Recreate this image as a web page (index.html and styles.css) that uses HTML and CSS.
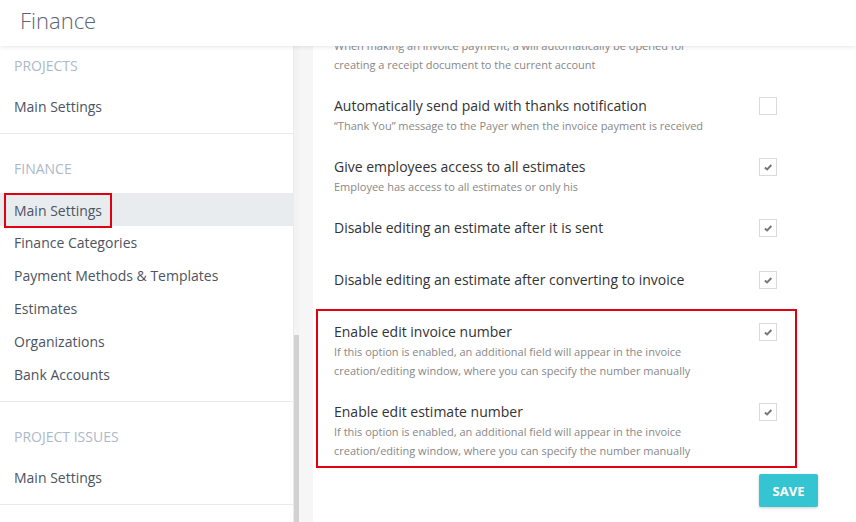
FILE: index.html
```html
<!DOCTYPE html>
<html lang="en">
<head>
    <meta charset="UTF-8">
    <meta name="viewport" content="width=device-width, initial-scale=1.0">
    <title>Finance</title>
    <link rel="stylesheet" href="styles.css">
</head>
<body>
    <!-- Top bar -->
    <header class="topbar">
        <h1 class="page-title">Finance</h1>
    </header>

    <div class="layout">
        <!-- Settings menu -->
        <aside class="sidebar">
            <nav class="sidebar-nav">
                <section class="nav-group">
                    <div class="nav-heading">Projects</div>
                    <a class="nav-item" href="#">Main Settings</a>
                </section>
                <section class="nav-group">
                    <div class="nav-heading">Finance</div>
                    <a class="nav-item active" href="#"><span class="marked">Main Settings</span></a>
                    <a class="nav-item" href="#">Finance Categories</a>
                    <a class="nav-item" href="#">Payment Methods &amp; Templates</a>
                    <a class="nav-item" href="#">Estimates</a>
                    <a class="nav-item" href="#">Organizations</a>
                    <a class="nav-item" href="#">Bank Accounts</a>
                </section>
                <section class="nav-group">
                    <div class="nav-heading">Project Issues</div>
                    <a class="nav-item" href="#">Main Settings</a>
                </section>
            </nav>
            <div class="scrollbar"><div class="scrollbar-thumb"></div></div>
        </aside>

        <!-- Settings list (scrolled) -->
        <main class="panel">
            <div class="settings">
                <div class="setting scrolled">
                    <div class="setting-text">
                        <div class="setting-desc">When making an invoice payment, a will automatically be opened for creating a receipt document to the current account</div>
                    </div>
                </div>
                <div class="setting">
                    <div class="setting-text">
                        <div class="setting-title">Automatically send paid with thanks notification</div>
                        <div class="setting-desc">“Thank You” message to the Payer when the invoice payment is received</div>
                    </div>
                    <span class="checkbox"></span>
                </div>
                <div class="setting">
                    <div class="setting-text">
                        <div class="setting-title">Give employees access to all estimates</div>
                        <div class="setting-desc">Employee has access to all estimates or only his</div>
                    </div>
                    <span class="checkbox checked"><svg viewBox="0 0 18 18"><polyline points="5.5,9.5 8,11.8 12.8,6.8"/></svg></span>
                </div>
                <div class="setting">
                    <div class="setting-text">
                        <div class="setting-title">Disable editing an estimate after it is sent</div>
                    </div>
                    <span class="checkbox checked"><svg viewBox="0 0 18 18"><polyline points="5.5,9.5 8,11.8 12.8,6.8"/></svg></span>
                </div>
                <div class="setting">
                    <div class="setting-text">
                        <div class="setting-title">Disable editing an estimate after converting to invoice</div>
                    </div>
                    <span class="checkbox checked"><svg viewBox="0 0 18 18"><polyline points="5.5,9.5 8,11.8 12.8,6.8"/></svg></span>
                </div>

                <div class="highlight">
                    <div class="setting">
                        <div class="setting-text">
                            <div class="setting-title">Enable edit invoice number</div>
                            <div class="setting-desc">If this option is enabled, an additional field will appear in the invoice creation/editing window, where you can specify the number manually</div>
                        </div>
                        <span class="checkbox checked"><svg viewBox="0 0 18 18"><polyline points="5.5,9.5 8,11.8 12.8,6.8"/></svg></span>
                    </div>
                    <div class="setting">
                        <div class="setting-text">
                            <div class="setting-title">Enable edit estimate number</div>
                            <div class="setting-desc">If this option is enabled, an additional field will appear in the invoice creation/editing window, where you can specify the number manually</div>
                        </div>
                        <span class="checkbox checked"><svg viewBox="0 0 18 18"><polyline points="5.5,9.5 8,11.8 12.8,6.8"/></svg></span>
                    </div>
                </div>

                <div class="actions">
                    <button class="btn-save" type="button">SAVE</button>
                </div>
            </div>
        </main>
    </div>
</body>
</html>
```

FILE: styles.css
```css
* {
    box-sizing: border-box;
}

body {
    margin: 0;
    height: 522px;
    overflow: hidden;
    font-family: "Open Sans", "Noto Sans", sans-serif;
    background-color: #f6f6f6;
    color: #333;
}

/* Top bar */
.topbar {
    position: relative;
    z-index: 2;
    height: 46px;
    background-color: #fff;
    box-shadow: 0 1px 4px rgba(0, 0, 0, 0.1);
}

.page-title {
    margin: 0;
    padding-left: 20px;
    font-size: 22px;
    font-weight: 300;
    line-height: 40px;
    color: #5b6471;
}

.layout {
    display: flex;
    height: 476px;
}

/* Sidebar */
.sidebar {
    display: flex;
    width: 299px;
    background-color: #fff;
    overflow: hidden;
}

.sidebar-nav {
    width: 293px;
    margin-top: -15px;
}

.nav-group {
    padding: 25px 0 10px;
    border-bottom: 1px solid #e8ebee;
}

.nav-heading {
    padding-left: 14px;
    margin-bottom: 14px;
    font-size: 14px;
    line-height: 20px;
    text-transform: uppercase;
    color: #adb9c8;
}

.nav-item {
    display: block;
    height: 33px;
    padding-left: 14px;
    font-size: 14px;
    line-height: 33px;
    color: #4c5461;
    text-decoration: none;
}

.nav-item.active {
    background-color: #e9ecef;
}

.marked {
    display: inline-block;
    vertical-align: top;
    margin-left: -10px;
    padding: 0 8px;
    line-height: 31px;
    border: 2px solid #e1000f;
}

.scrollbar {
    width: 6px;
    background-color: #f3f3f3;
    border-left: 1px solid #ebebeb;
}

.scrollbar-thumb {
    margin-top: 289px;
    height: 200px;
    background-color: #d2d2d2;
}

/* Settings panel */
.panel {
    flex: 1;
    margin-left: 14px;
    background-color: #fff;
    overflow: hidden;
}

.settings {
    width: 464px;
    margin-top: -46px;
    padding-left: 21px;
}

.setting {
    display: flex;
    align-items: flex-start;
    min-height: 52px;
    padding: 16px 0 6px;
}

/* row scrolled up under the top bar, its title is out of view */
.setting.scrolled {
    padding-top: 36px;
}

.setting-text {
    width: 380px;
}

.setting-title {
    font-size: 14px;
    line-height: 20px;
    color: #333;
}

.setting-desc {
    font-size: 11px;
    line-height: 19px;
    color: #888;
}

.checkbox {
    display: block;
    width: 18px;
    height: 18px;
    margin: 1px 0 0 auto;
    border: 1px solid #dadada;
    background-color: #fff;
}

.checkbox svg {
    display: block;
    width: 16px;
    height: 16px;
    fill: none;
    stroke: #767676;
    stroke-width: 2.2;
}

/* Marked group */
.highlight {
    margin: 3px -20px 0 -18px;
    padding: 0 18px 0 16px;
    border: 2px solid #e1000f;
}

.highlight .setting:first-child {
    padding-top: 11px;
}

.actions {
    display: flex;
    justify-content: flex-end;
    margin: 6px -41px 0 0;
}

.btn-save {
    width: 59px;
    height: 33px;
    padding: 0;
    border: none;
    border-radius: 2px;
    background-color: #35c5d2;
    box-shadow: 0 1px 3px rgba(0, 0, 0, 0.2);
    font-family: "Open Sans", sans-serif;
    font-size: 13px;
    font-weight: 700;
    color: #fff;
}
```
